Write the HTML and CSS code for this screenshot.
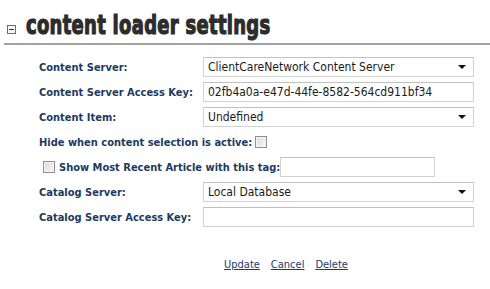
FILE: index.html
```html
<!DOCTYPE html>
<html>
<head>
<meta charset="utf-8">
<link rel="stylesheet" href="styles.css">
</head>
<body>
<div class="header">
  <span class="toggle"><span class="dash"></span></span>
  <h1 class="title">content loader settings</h1>
</div>
<div class="form">
  <div class="label">Content Server:</div>
  <div class="select"><span class="val">ClientCareNetwork Content Server</span><span class="arrow"></span></div>
  <div class="label">Content Server Access Key:</div>
  <div class="input"><span class="val">02fb4a0a-e47d-44fe-8582-564cd911bf34</span></div>
  <div class="label">Content Item:</div>
  <div class="select"><span class="val">Undefined</span><span class="arrow"></span></div>
  <div class="span-row hide-row"><span class="label">Hide when content selection is active:</span><span class="check"></span></div>
  <div class="span-row show-row"><span class="check"></span><span class="label show-label">Show Most Recent Article with this tag:</span><span class="input tag"></span></div>
  <div class="label">Catalog Server:</div>
  <div class="select"><span class="val">Local Database</span><span class="arrow"></span></div>
  <div class="label">Catalog Server Access Key:</div>
  <div class="input"></div>
</div>
<div class="links">
  <a href="#">Update</a>
  <a href="#">Cancel</a>
  <a href="#">Delete</a>
</div>
</body>
</html>
```
FILE: styles.css
```css
html, body {
  margin: 0;
  padding: 0;
  background: #fff;
  width: 490px;
  height: 289px;
  overflow: hidden;
}
.header {
  display: flex;
  align-items: center;
  margin-left: 4px;
  height: 45px;
  border-bottom: 2px solid #a0a0a0;
  box-sizing: border-box;
  padding-top: 6px;
}
.toggle {
  width: 9px;
  height: 9px;
  border: 1px solid #6a6a6a;
  box-sizing: border-box;
  margin-left: 3px;
  margin-top: 9px;
  display: flex;
  align-items: center;
  justify-content: center;
  background: #fafafa;
  flex: none;
}
.dash {
  width: 5px;
  height: 1px;
  background: #333;
}
.title {
  margin: 0 0 0 10px;
  font-family: "DejaVu Sans Condensed", "DejaVu Sans", sans-serif;
  font-weight: 700;
  font-size: 27px;
  color: #2c2c2c;
  -webkit-text-stroke: 1.2px #2c2c2c;
  letter-spacing: 0.4px;
  line-height: 30px;
  white-space: nowrap;
  transform: scaleX(0.74);
  transform-origin: left center;
}
.form {
  display: grid;
  grid-template-columns: 164px 271px;
  row-gap: 5px;
  margin-left: 39px;
  margin-top: 12px;
  font-family: "DejaVu Sans Condensed", "DejaVu Sans", sans-serif;
}
.label {
  font-weight: 700;
  font-size: 11px;
  color: #1c3a5e;
  display: flex;
  align-items: center;
  white-space: nowrap;
}
.select, .input {
  height: 20px;
  box-sizing: border-box;
  border: 1px solid #d2d2d2;
  border-top-color: #c0c0c0;
  background: #fff;
  display: flex;
  align-items: center;
  padding-left: 4px;
  font-size: 12px;
  color: #1a1a1a;
  font-family: "DejaVu Sans Condensed", "DejaVu Sans", sans-serif;
}
.select .val, .input .val {
  flex: 1;
}
.arrow {
  width: 0;
  height: 0;
  border-left: 4px solid transparent;
  border-right: 4px solid transparent;
  border-top: 4px solid #111;
  margin-right: 7px;
}
.span-row {
  grid-column: 1 / 3;
  display: flex;
  align-items: center;
  height: 20px;
}
.check {
  width: 12px;
  height: 12px;
  box-sizing: border-box;
  border: 1px solid #8e8f8f;
  background: linear-gradient(135deg, #dcdcdc, #f6f6f6);
  box-shadow: inset 0 0 0 1px #f4f4f4;
}
.hide-row .check {
  margin-left: 3px;
}
.show-row .check {
  margin-left: 4px;
  margin-right: 4px;
}
.tag {
  width: 155px;
}
.links {
  margin-left: 224px;
  margin-top: 31px;
  font-family: "DejaVu Sans Condensed", "DejaVu Sans", sans-serif;
  font-size: 11px;
  display: flex;
  gap: 11px;
}
.links a {
  color: #1c3a6a;
  text-decoration: underline;
}
```
